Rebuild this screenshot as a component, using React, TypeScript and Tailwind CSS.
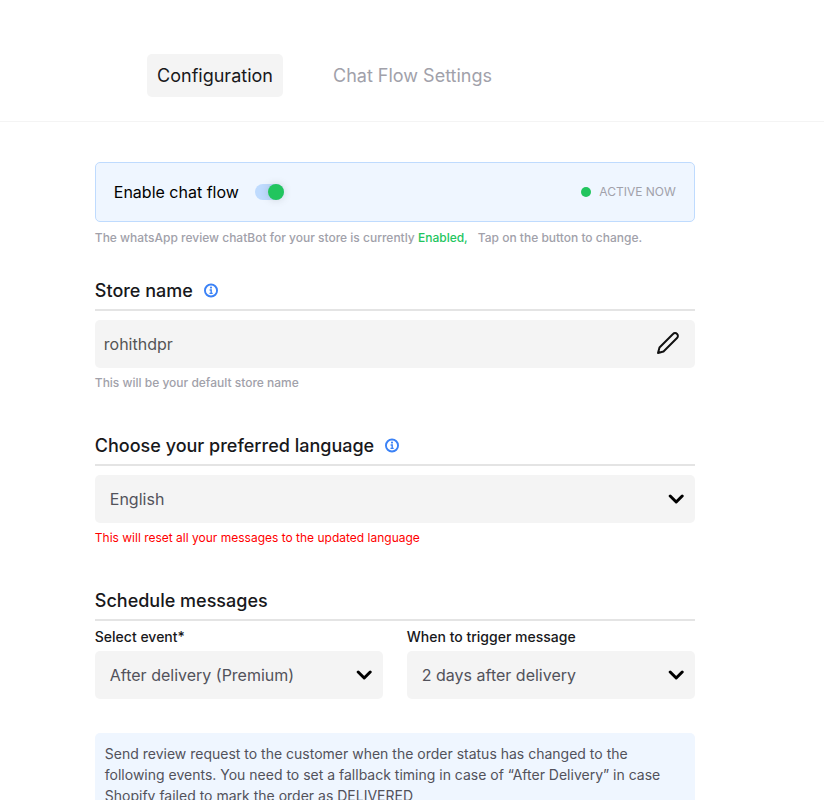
import type { ReactNode } from "react";

function InfoIcon() {
  return (
    <svg className="mb-px h-[15px] w-[14px] text-[#3b82f6]" viewBox="0 0 14 15" fill="none" stroke="currentColor">
      <circle cx="7" cy="7.5" r="6.05" strokeWidth="1.9" />
      <path d="M5.6 7h1.6v3.4M5.5 10.4h3.2" strokeWidth="1.4" />
      <circle cx="7" cy="4.6" r="1.05" fill="currentColor" stroke="none" />
    </svg>
  );
}

function PencilIcon() {
  return (
    <svg className="mb-[2px] size-6" viewBox="0 0 24 24" fill="none" stroke="#111111" strokeWidth="2" strokeLinejoin="round">
      <path d="M17 3a2.83 2.83 0 1 1 4 4L7.5 20.5 2 22l1.5-5.5Z" />
    </svg>
  );
}

function Heading({ children, info = false }: { children: ReactNode; info?: boolean }) {
  return (
    <div className="flex h-[38px] items-center gap-[11px] border-b-2 border-[#e4e4e4] text-lg font-medium text-[#18181b]">
      <h2>{children}</h2>
      {info && <InfoIcon />}
    </div>
  );
}

function Chevron() {
  return (
    <svg className="h-[10px] w-4" viewBox="0 0 16 10" fill="none" stroke="black" strokeWidth="3" strokeLinecap="round" strokeLinejoin="round">
      <path d="M2.2 2l6 6 6-6" />
    </svg>
  );
}

function Select({ value }: { value: string }) {
  return (
    <button className="flex h-12 w-full items-center justify-between rounded-[5px] bg-[#f4f4f4] pr-[11px] pl-[15px] text-base text-[#52525b]">
      <span>{value}</span>
      <Chevron />
    </button>
  );
}

export default function App() {
  return (
    <div className="h-[800px] overflow-hidden bg-white font-['Inter',sans-serif]">
      <nav className="flex h-[122px] items-start gap-10 border-b border-[#f4f4f4] pt-[54px] pl-[147px] text-lg">
        <button className="h-[43px] w-[136px] rounded-[5px] bg-[#f4f4f4] text-[#18181b]">Configuration</button>
        <button className="h-[43px] px-[10px] text-[#a1a1aa]">Chat Flow Settings</button>
      </nav>
      <main className="ml-[94.8px] w-[600px] pt-10">
        <section>
          <div className="flex h-[60px] items-center rounded-[5px] border border-[#bfdbfe] bg-[#eff6ff] px-[18px]">
            <span className="text-base text-black">Enable chat flow</span>
            <button aria-label="Enable chat flow" className="ml-4 flex h-4 w-[29px] items-center justify-end rounded-full bg-[#bfdbfe]">
              <span className="size-4 rounded-full bg-[#22c55e] shadow-[0_0_8px_rgba(0,0,0,0.15)]" />
            </button>
            <div className="ml-auto flex items-center gap-2 text-xs text-[#a1a1aa]">
              <span className="size-[10px] rounded-full bg-[#22c55e]" />
              ACTIVE NOW
            </div>
          </div>
          <p className="mt-2 text-xs font-medium text-[#a1a1aa]">
            The whatsApp review chatBot for your store is currently <span className="text-[#22c55e]">Enabled,</span>
            <span className="ml-[10px]">Tap on the button to change.</span>
          </p>
        </section>
        <section className="mt-[27px]">
          <Heading info>Store name</Heading>
          <div className="mt-[9px] flex h-12 items-center justify-between rounded-[5px] bg-[#f4f4f4] pr-[15px] pl-[9px] text-base text-[#555]">
            <span>rohithdpr</span>
            <PencilIcon />
          </div>
          <p className="mt-[7px] text-xs font-medium text-[#a1a1aa]">This will be your default store name</p>
        </section>
        <section className="mt-[37px]">
          <Heading info>Choose your preferred language</Heading>
          <div className="mt-[9px]">
            <Select value="English" />
          </div>
          <p className="mt-[7px] text-xs text-[#ff0000]">This will reset all your messages to the updated language</p>
        </section>
        <section className="mt-[37px]">
          <Heading>Schedule messages</Heading>
          <div className="mt-[6px] grid grid-cols-2 gap-6">
            <label className="block text-sm font-medium text-[#18181b]">
              <span className="mb-[4px] block">Select event*</span>
              <span className="block font-normal"><Select value="After delivery (Premium)" /></span>
            </label>
            <label className="block text-sm font-medium text-[#18181b]">
              <span className="mb-[4px] block">When to trigger message</span>
              <span className="block font-normal"><Select value="2 days after delivery" /></span>
            </label>
          </div>
          <p className="mt-[34px] rounded-[5px] bg-[#eff6ff] p-[10px] text-sm leading-[21px] text-[#52525b]">
            Send review request to the customer when the order status has changed to the following events. You need to set a fallback timing in case of “After Delivery” in case Shopify failed to mark the order as DELIVERED
          </p>
        </section>
      </main>
    </div>
  );
}
